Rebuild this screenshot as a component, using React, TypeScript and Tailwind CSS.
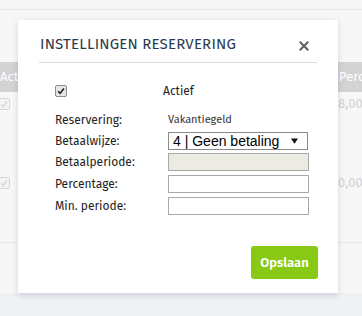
import React from 'react'

const FIELDS = [
  { label: 'Betaalperiode:', disabled: true },
  { label: 'Percentage:', disabled: false },
  { label: 'Min. periode:', disabled: false },
] as const

function TinyCheck() {
  return (
    <span className="-ml-[2px] flex h-[12px] w-[12px] items-center justify-center rounded-[2px] border border-[#d8d8d8] bg-[#f4f4f4]">
      <svg viewBox="0 0 12 12" className="h-[10px] w-[10px]">
        <path d="M2.5 6.5 5 9 9.5 3" fill="none" stroke="#d9d9d9" strokeWidth="1.8" />
      </svg>
    </span>
  )
}

export default function App() {
  return (
    <div className="relative h-[316px] w-[362px] overflow-hidden bg-[#f0f1f3] font-['Fira_Sans','Lato','Open_Sans',sans-serif]">
      {/* page behind the dialog */}
      <div className="h-[10px] border-b border-[#e8e8e9] bg-[#f6f6f7]" />
      <div className="h-[52px] bg-[#f7f7f8]" />
      <div className="flex h-[30px] items-center whitespace-nowrap bg-[#d3d3d4] text-[13px] text-white">
        <span className="w-[339px] shrink-0">Actief</span>
        <span className="shrink-0">Percentage</span>
      </div>
      <div className="h-[151px] border-b border-[#e6e6e8] bg-[#f7f7f8] text-[13px] text-[#d0d0d0]">
        <div className="flex h-[22px] items-center pt-[2px]">
          <span className="w-[338px] shrink-0"><TinyCheck /></span>
          <span>8,000</span>
        </div>
        <div className="mt-[58px] flex h-[22px] items-center">
          <span className="w-[338px] shrink-0"><TinyCheck /></span>
          <span>0,000</span>
        </div>
      </div>
      <div className="h-[50px] bg-[#f7f7f8]" />

      {/* dialog */}
      <div className="absolute left-[18px] top-[20px] flex h-[273px] w-[320px] flex-col bg-white shadow-[0_2px_6px_rgba(40,50,90,0.18)]">
        <div className="mx-[21px] flex h-[43px] items-end justify-between border-b border-[#dcdcdc] pb-[9px]">
          <h2 className="pl-[1px] text-[15px] leading-[18px] tracking-[0.2px] text-[#2b3a4f]">INSTELLINGEN RESERVERING</h2>
          <svg viewBox="0 0 10 10" className="mb-[2px] mr-[8px] h-[10px] w-[10px]">
            <path d="M1.5 1.5 8.5 8.5M8.5 1.5 1.5 8.5" stroke="#666" strokeWidth="2.2" strokeLinecap="square" />
          </svg>
        </div>

        <div className="pl-[37px] pt-[19px] text-[12px] text-[#222]">
          <div className="flex h-[18px] items-center">
            <span className="w-[108px]">
              <span className="flex h-[12px] w-[12px] items-center justify-center rounded-[2px] border border-[#8c8c8c] bg-[#e6e6e6]">
                <svg viewBox="0 0 12 12" className="h-[10px] w-[10px]">
                  <path d="M2.5 6.3 5 8.8 9.5 3" fill="none" stroke="#222" strokeWidth="1.9" />
                </svg>
              </span>
            </span>
            <span className="text-[12px]">Actief</span>
          </div>

          <div className="mt-[11px] flex h-[18px] items-center">
            <span className="w-[113px]">Reservering:</span>
            <span className="text-[11px] text-[#333]">Vakantiegeld</span>
          </div>

          <div className="mt-[3px] flex h-[18px] items-center">
            <span className="w-[113px]">Betaalwijze:</span>
            <div className="flex h-[18px] w-[140px] items-center justify-between border border-[#8a8a8a] bg-white pl-[4px] pr-[9px] font-['Liberation_Sans',Arial,sans-serif] text-[14px] text-black">
              <span className="leading-none">4 | Geen betaling</span>
              <svg viewBox="0 0 8 6" className="h-[6px] w-[7px]">
                <path d="M0 0h8L4 6z" fill="#111" />
              </svg>
            </div>
          </div>

          {FIELDS.map((f, i) => (
            <div key={f.label} className={`flex h-[18px] items-center ${i === 0 ? 'mt-[3px]' : 'mt-[4px]'}`}>
              <span className="w-[113px]">{f.label}</span>
              <div className={`h-[18px] w-[141px] border border-[#a9a9a9] ${f.disabled ? 'bg-[#ebebe4]' : 'bg-white'}`} />
            </div>
          ))}
        </div>

        <div className="mt-auto flex justify-end pb-[14px] pr-[20px]">
          <button className="h-[33px] w-[67px] rounded-[3px] bg-[#88c916] text-[13px] font-semibold text-white">
            Opslaan
          </button>
        </div>
      </div>
    </div>
  )
}
